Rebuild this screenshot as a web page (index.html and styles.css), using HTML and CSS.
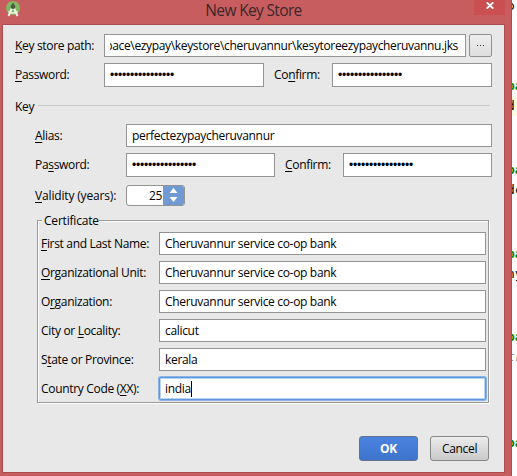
FILE: index.html
```html
<!DOCTYPE html>
<html lang="en">
<head>
<meta charset="utf-8">
<title>New Key Store</title>
<link rel="stylesheet" href="styles.css">
</head>
<body>
<div class="desktop">
  <main class="window">
    <header class="titlebar">
      <svg class="app-icon" width="16" height="17" viewBox="0 0 16 17">
        <circle cx="7" cy="7" r="7" fill="#83b95f"/>
        <path d="M6.300 6.500 2.500 15M7.700 6.500 11.500 15" stroke="#eef0e9" stroke-width="2" fill="none"/>
        <path d="M2.500 10.500Q7 13.500 11.500 10.500" stroke="#eef0e9" stroke-width="1.600" fill="none"/>
        <circle cx="7" cy="5.700" r="2.400" fill="#4d5d48"/>
        <path d="M7 2v2" stroke="#4d5d48" stroke-width="1.500"/>
      </svg>
      <h1 class="title">New Key Store</h1>
      <button class="close" aria-label="Close"><svg width="8" height="7" viewBox="0 0 8 7"><path d="M.7 .3 7.300 6.700M7.300 .3 .7 6.700" stroke="#fff" stroke-width="1.800"/></svg></button>
    </header>
    <form class="content">
      <div class="row path-row">
        <label class="lab"><u>K</u>ey store path:</label>
        <div class="field path"><span class="path-text">pace\ezypay\keystore\cheruvannur\kesytoreezypaycheruvannu.jks</span></div>
        <button type="button" class="browse"><i></i><i></i><i></i></button>
      </div>
      <div class="row pass-row">
        <label class="lab"><u>P</u>assword:</label>
        <div class="field dots">••••••••••••••••</div>
        <label class="confirm">Co<u>n</u>firm:</label>
        <div class="field dots">••••••••••••••••</div>
      </div>
      <div class="section"><span class="section-name">Key</span><span class="rule"></span></div>
      <div class="row key-row">
        <label class="lab"><u>A</u>lias:</label>
        <div class="field alias">perfectezypaycheruvannur</div>
      </div>
      <div class="row key-row pass-row">
        <label class="lab">Pa<u>s</u>sword:</label>
        <div class="field dots">••••••••••••••••</div>
        <label class="confirm"><u>C</u>onfirm:</label>
        <div class="field dots">••••••••••••••••</div>
      </div>
      <div class="row key-row validity">
        <label class="lab"><u>V</u>alidity (years):</label>
        <div class="spinner"><span class="num">25</span><span class="arrows"><svg width="9" height="15" viewBox="0 0 9 15"><path d="M4.500 0 8.500 5H.5ZM.5 9h8l-4 5Z" fill="#fff"/></svg></span></div>
      </div>
      <section class="certificate">
        <h2 class="legend">Certificate</h2>
        <div class="cert-row"><label><u>F</u>irst and Last Name:</label><div class="field">Cheruvannur service co-op bank</div></div>
        <div class="cert-row"><label><u>O</u>rganizational Unit:</label><div class="field">Cheruvannur service co-op bank</div></div>
        <div class="cert-row"><label>O<u>r</u>ganization:</label><div class="field">Cheruvannur service co-op bank</div></div>
        <div class="cert-row"><label>City or <u>L</u>ocality:</label><div class="field">calicut</div></div>
        <div class="cert-row"><label>S<u>t</u>ate or Province:</label><div class="field">kerala</div></div>
        <div class="cert-row"><label>Country Code (<u>X</u>X):</label><div class="field focused">india<span class="caret"></span></div></div>
      </section>
      <footer class="actions">
        <button type="button" class="btn primary">OK</button>
        <button type="button" class="btn">Cancel</button>
      </footer>
    </form>
  </main>
  <aside class="editor">
    <code class="line l0">o</code>
    <code class="line green l1">pa</code>
    <code class="line current l2">d-</code>
    <code class="line green l3">pa</code>
    <code class="line l4">dc</code>
    <code class="line green l5">pa</code>
    <code class="line l6">ny</code>
    <code class="line green l7">pa</code>
    <code class="line comment l8">tr</code>
    <code class="line green l9">pa</code>
  </aside>
</div>
</body>
</html>
```
FILE: styles.css
```css
* { box-sizing: border-box; }
body { margin: 0; overflow: hidden; background: #fff; }
button { font: inherit; letter-spacing: inherit; padding: 0; margin: 0; }
.desktop {
  display: flex;
  width: 517px;
  height: 476px;
  overflow: hidden;
  font: 12px/16px "Open Sans", "Noto Sans", sans-serif;
  letter-spacing: -0.32px;
  color: #000;
}
.window {
  flex: none;
  width: 512px;
  height: 476px;
  padding: 0 6px 3px 2px;
  background: #c85d5f;
  border-right: 1px solid #ad4b4e;
}
.titlebar {
  display: grid;
  grid-template-columns: 100px 1fr 100px;
  align-items: start;
  height: 24px;
}
.app-icon { margin: 1px 0 0 4px; }
.title {
  margin: 0;
  font-size: 15.5px;
  line-height: 20px;
  font-weight: 400;
  letter-spacing: -0.65px;
  text-align: center;
  color: #3a2729;
  white-space: nowrap;
}
.close {
  display: flex;
  justify-content: center;
  justify-self: end;
  width: 31px;
  height: 15px;
  padding-top: 2px;
  border: 0;
  background: #c94f51;
}
.content {
  height: 449px;
  padding: 9px 12px 0;
  border: 1px solid #ab4d50;
  background: #e8e8e8;
}
.row { display: flex; align-items: center; white-space: nowrap; }
.lab { flex: none; width: 89px; }
u { text-decoration-thickness: 1px; text-underline-offset: 2px; }
.field {
  flex: none;
  height: 23px;
  padding: 3px 5px 0;
  border: 1px solid #949494;
  background: #fff;
  line-height: 16px;
  white-space: nowrap;
  overflow: hidden;
}
.path-row .path { display: flex; justify-content: flex-end; width: 362px; margin-right: 3px; padding-right: 7px; }
.path-text { display: flex; justify-content: flex-end; width: 348px; overflow: hidden; letter-spacing: -0.34px; }
.browse {
  display: flex;
  align-items: center;
  justify-content: center;
  gap: 2px;
  width: 23px;
  height: 23px;
  border: 1px solid #909090;
  border-radius: 2px;
  background: linear-gradient(#eee, #dedede);
}
.browse i { width: 1px; height: 1px; background: #333; }
.pass-row { margin-top: 6px; }
.pass-row .field { width: 160px; height: 24px; }
.dots { font-family: "Liberation Sans", sans-serif; letter-spacing: -0.2px; }
.confirm { flex: none; width: 68px; padding-left: 10px; }
.section { display: flex; height: 17px; margin-top: 12px; }
.section-name { width: 23px; }
.rule { width: 452px; height: 1px; margin-top: 6px; background: #c9c9c9; }
.key-row { padding-left: 20px; }
.key-row .lab { width: 91px; }
.validity .lab { letter-spacing: -0.16px; }
.section + .key-row { margin-top: 8px; }
.alias { width: 366px; }
.key-row.pass-row .field { width: 149px; }
.validity { margin-top: 8px; }
.spinner {
  display: flex;
  width: 59px;
  height: 21px;
  border: 1px solid #949494;
  border-radius: 3px;
  background: #fff;
  overflow: hidden;
}
.num { width: 36px; padding: 2px 1px 0 0; text-align: right; }
.arrows { display: flex; align-items: center; justify-content: center; flex: 1; background: #709ad4; }
.certificate {
  display: grid;
  align-content: start;
  gap: 6px;
  width: 452px;
  height: 183px;
  margin: 14px 0 0 22px;
  padding: 0 2px 0 3px;
  border: 1px solid #989898;
  box-shadow: 1px 1px #fff, inset 1px 1px #fff;
}
.legend {
  width: 57px;
  height: 16px;
  margin: -8px 0 -3px 1px;
  padding-left: 2px;
  font-size: inherit;
  font-weight: 400;
  letter-spacing: -0.2px;
  background: #e8e8e8;
}
.cert-row { display: grid; grid-template-columns: 118px 327px; align-items: center; white-space: nowrap; }
.focused { border-color: #5c97dd; border-radius: 2px; box-shadow: 0 0 0 1px #8ab4e8, inset 0 0 0 1px #b9d4f5; }
.caret { display: inline-block; width: 1px; height: 16px; vertical-align: top; background: #000; }
.actions { display: flex; justify-content: flex-end; gap: 12px; padding-right: 3px; margin-top: 33px; }
.btn {
  width: 59px;
  height: 25px;
  border: 1px solid #888;
  border-radius: 3px;
  background: linear-gradient(#ececec, #c9c9c9);
  color: #000;
}
.primary { border-color: #64738a; background: linear-gradient(#4a83e0, #3e74cd); color: #fff; font-weight: 700; }
.editor {
  display: grid;
  grid-template-rows: 16px 80px 21px 63px 20px 64px 21px 62px 20px 86px;
  width: 5px;
  overflow: hidden;
  background: #fff;
}
.line { font: 13px/20px "DejaVu Sans Mono", monospace; letter-spacing: 0; height: 20px; text-indent: -5px; white-space: nowrap; overflow: hidden; }
.green { color: #008000; font-weight: 700; }
.current { background: #fffae3; }
.comment { color: #808080; font-style: italic; }
.l0 { margin-top: -4px; }
.l1, .l3, .l5, .l7, .l9 { align-self: end; }
```
